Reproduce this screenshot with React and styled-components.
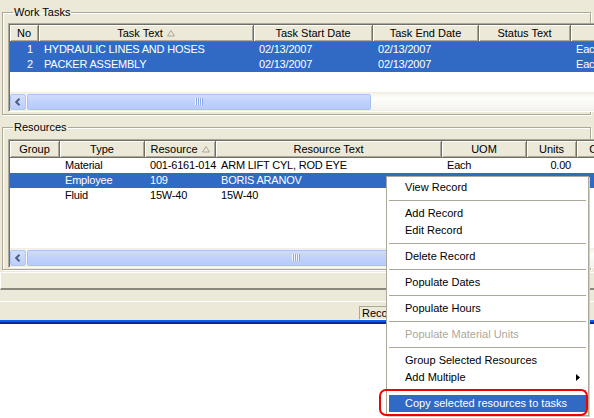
import React from 'react'
import styled, { createGlobalStyle } from 'styled-components'

const GlobalStyle = createGlobalStyle`
  html, body { margin: 0; padding: 0; background: #fff; overflow: hidden; }
  body { font-family: "Liberation Sans", Arial, sans-serif; font-size: 11px; color: #000; }
  * { box-sizing: border-box; }
`

const taskCols = '29px 215px 119px 106px 92px 100px'
const resCols = '50px 85px 71px 226px 85px 50px 48px'

const taskHeaders = [
  { label: 'No' },
  { label: 'Task Text', sorted: true },
  { label: 'Task Start Date' },
  { label: 'Task End Date' },
  { label: 'Status Text' },
  { label: 'UOM' },
]

const taskRows = [
  { selected: true, cells: ['1', 'HYDRAULIC LINES AND HOSES', '02/13/2007', '02/13/2007', '', 'Each'] },
  { selected: true, cells: ['2', 'PACKER ASSEMBLY', '02/13/2007', '02/13/2007', '', 'Each'] },
]
const taskAlign = ['right', 'left', 'left', 'left', 'left', 'left']

const resHeaders = [
  { label: 'Group' },
  { label: 'Type' },
  { label: 'Resource', sorted: true },
  { label: 'Resource Text' },
  { label: 'UOM' },
  { label: 'Units' },
  { label: 'Cost' },
]

const resRows = [
  { cells: ['', 'Material', '001-6161-014', 'ARM LIFT CYL, ROD EYE', 'Each', '0.00', ''] },
  { selected: true, cells: ['', 'Employee', '109', 'BORIS ARANOV', 'Hour', '0.00', ''] },
  { cells: ['', 'Fluid', '15W-40', '15W-40', '', '', ''] },
]
const resAlign = ['left', 'left', 'left', 'left', 'left', 'right', 'right']

const menuItems = [
  { label: 'View Record' },
  { sep: true },
  { label: 'Add Record' },
  { label: 'Edit Record' },
  { sep: true },
  { label: 'Delete Record' },
  { sep: true },
  { label: 'Populate Dates' },
  { sep: true },
  { label: 'Populate Hours' },
  { sep: true },
  { label: 'Populate Material Units', disabled: true },
  { sep: true },
  { label: 'Group Selected Resources' },
  { label: 'Add Multiple', submenu: true },
  { sep: true },
  { label: 'Copy selected resources to tasks', active: true },
]

const Screen = styled.div`
  position: relative;
  width: 594px;
  height: 418px;
  overflow: hidden;
  background: #fff;
`

const Window = styled.div`
  height: 320px;
  background: #ECE9D8;
  display: flex;
  flex-direction: column;
  overflow: hidden;
`

const Taskbar = styled.div`
  height: 4px;
  background: linear-gradient(#0A5EEC 0, #0A5EEC 50%, #0A2A92 50%, #0A2A92 100%);
`

const GroupBox = styled.fieldset`
  margin: 6px 3px 0 2px;
  padding: ${p => p.$padTop}px 0 ${p => p.$padBottom}px 5px;
  border: 1px solid #ACA899;
  box-shadow: inset 1px 1px #fff, 1px 1px #fff;
  min-width: 0;
  overflow: visible;
`

const Legend = styled.legend`
  margin-left: 5px;
  padding: 0 1px;
  font-size: 11px;
  line-height: 13px;
`

const ListView = styled.div`
  width: 660px;
  height: ${p => p.$h}px;
  display: flex;
  flex-direction: column;
  background: #fff;
  padding: 1px;
  border: 1px solid;
  border-color: #ACA899 #fff #fff #ACA899;
  box-shadow: inset 1px 1px #716F64, inset -1px -1px #F1EFE2;
`

const HeaderRow = styled.div`
  display: grid;
  grid-template-columns: ${p => p.$cols};
  height: 17px;
  flex: none;
`

const HeaderCell = styled.div`
  display: flex;
  align-items: center;
  justify-content: center;
  gap: 4px;
  background: #ECE9D8;
  border-right: 1px solid #716F64;
  border-bottom: 1px solid #716F64;
  box-shadow: inset 1px 1px #fff, inset -1px -1px #ACA899;
  white-space: nowrap;
  overflow: hidden;
`

const Body = styled.div`
  flex: 1;
  background: #fff;
  border-bottom: 1px solid #F1EFE2;
`

const Row = styled.div`
  display: grid;
  grid-template-columns: ${p => p.$cols};
  height: 15px;
  align-items: center;
  background: ${p => (p.$selected ? '#316AC5' : '#fff')};
  color: ${p => (p.$selected ? '#fff' : '#000')};
`

const Cell = styled.div`
  padding: 0 ${p => (p.$align === 'right' ? 6 : 0)}px 0 ${p => (p.$align === 'right' ? 0 : 5)}px;
  text-align: ${p => p.$align};
  white-space: nowrap;
  line-height: 15px;
  letter-spacing: -0.2px;
`

const HScroll = styled.div`
  display: flex;
  align-items: center;
  height: 17px;
  flex: none;
  background: linear-gradient(#F3F1EA, #FEFEFB 30%, #F4F3EE);
`

const ArrowButton = styled.div`
  width: 16px;
  height: 16px;
  flex: none;
  display: flex;
  align-items: center;
  justify-content: center;
  border: 1px solid #B0C6F4;
  border-radius: 2px;
  background: linear-gradient(#D2DEFD, #BCCEF9);
`

const Thumb = styled.div`
  width: ${p => p.$w}px;
  height: 16px;
  margin-left: 1px;
  flex: none;
  display: flex;
  align-items: center;
  justify-content: center;
  border: 1px solid #A9C0F3;
  border-radius: 2px;
  background: linear-gradient(#D0DCFD, #BFD0FB 50%, #B8CBF9);
`

const Grip = styled.span`
  width: 8px;
  height: 7px;
  background: repeating-linear-gradient(90deg, #EEF3FF 0, #EEF3FF 1px, #8CA8E6 1px, #8CA8E6 2px);
`

const FooterPanel = styled.div`
  margin-top: 2px;
  height: 18px;
  flex: none;
  border-top: 1px solid #FDFDFB;
  border-left: 1px solid #FDFDFB;
  border-bottom: 2px solid #8A877B;
`

const Toolbar = styled.div`
  height: 12px;
  flex: none;
  border-bottom: 1px solid #fff;
`

const StatusBar = styled.div`
  height: 18px;
  flex: none;
  display: flex;
  justify-content: flex-end;
  padding: 4px 6px 0 0;
`

const Pane = styled.div`
  width: ${p => p.$w}px;
  height: 14px;
  padding-left: 2px;
  line-height: 12px;
  white-space: nowrap;
  overflow: hidden;
  border: 1px solid;
  border-color: #ACA899 #fff #fff #ACA899;
`

const Menu = styled.div`
  position: absolute;
  left: 386px;
  top: 176px;
  width: 203px;
  padding: 2px 0 3px;
  background: #fff;
  border: 1px solid #ACA899;
  box-shadow: 1px 1px 0 #D4D0C8;
`

const MenuItem = styled.div`
  position: relative;
  height: 17px;
  margin: 0 2px;
  padding-left: 16px;
  line-height: 17px;
  white-space: nowrap;
  background: ${p => (p.$active ? '#316AC5' : 'transparent')};
  color: ${p => (p.$active ? '#fff' : p.$disabled ? '#ACA899' : '#000')};
`

const SubArrow = styled.svg`
  position: absolute;
  right: 6px;
  top: 5px;
`

const Separator = styled.div`
  height: 9px;
  margin: 0 2px;
  display: flex;
  align-items: center;
  &::after {
    content: '';
    flex: 1;
    height: 1px;
    background: #ACA899;
  }
`

const Callout = styled.div`
  position: absolute;
  left: 379px;
  top: 389px;
  width: 209px;
  height: 27px;
  border: 2px solid #F00000;
  border-radius: 7px;
  pointer-events: none;
`

const SortArrow = () => (
  <svg width="8" height="7" viewBox="0 0 8 7">
    <path d="M4 0.5 L0.5 6 H7.5 Z" fill="none" stroke="#ACA899" strokeWidth="1" />
  </svg>
)

const LeftChevron = () => (
  <svg width="8" height="8" viewBox="0 0 8 8">
    <path d="M5.5 0.8 L2.2 4 L5.5 7.2" fill="none" stroke="#4D6185" strokeWidth="2" />
  </svg>
)

const Grid = ({ cols, headers, rows, align, height, thumb }) => (
  <ListView $h={height}>
    <HeaderRow $cols={cols}>
      {headers.map(h => (
        <HeaderCell key={h.label}>
          {h.label}
          {h.sorted && <SortArrow />}
        </HeaderCell>
      ))}
    </HeaderRow>
    <Body>
      {rows.map((r, i) => (
        <Row key={i} $cols={cols} $selected={r.selected}>
          {r.cells.map((c, j) => (
            <Cell key={j} $align={align[j]}>{c}</Cell>
          ))}
        </Row>
      ))}
    </Body>
    <HScroll>
      <ArrowButton><LeftChevron /></ArrowButton>
      <Thumb $w={thumb}><Grip /></Thumb>
    </HScroll>
  </ListView>
)

const App = () => {
  return (
    <Screen>
      <GlobalStyle />
      <Window>
        <GroupBox $padTop={4} $padBottom={2}>
          <Legend>Work Tasks</Legend>
          <Grid cols={taskCols} headers={taskHeaders} rows={taskRows} align={taskAlign} height={89} thumb={344} />
        </GroupBox>
        <GroupBox $padTop={5} $padBottom={1}>
          <Legend>Resources</Legend>
          <Grid cols={resCols} headers={resHeaders} rows={resRows} align={resAlign} height={129} thumb={538} />
        </GroupBox>
        <FooterPanel />
        <Toolbar />
        <StatusBar>
          <Pane $w={229}>Record: 2 of 3</Pane>
        </StatusBar>
      </Window>
      <Taskbar />

      <Menu>
        {menuItems.map((m, i) =>
          m.sep ? (
            <Separator key={i} />
          ) : (
            <MenuItem key={i} $active={m.active} $disabled={m.disabled}>
              {m.label}
              {m.submenu && (
                <SubArrow width="4" height="7" viewBox="0 0 4 7">
                  <path d="M0 0 L4 3.5 L0 7 Z" fill="#000" />
                </SubArrow>
              )}
            </MenuItem>
          )
        )}
      </Menu>
      <Callout />
    </Screen>
  )
}

export default App
